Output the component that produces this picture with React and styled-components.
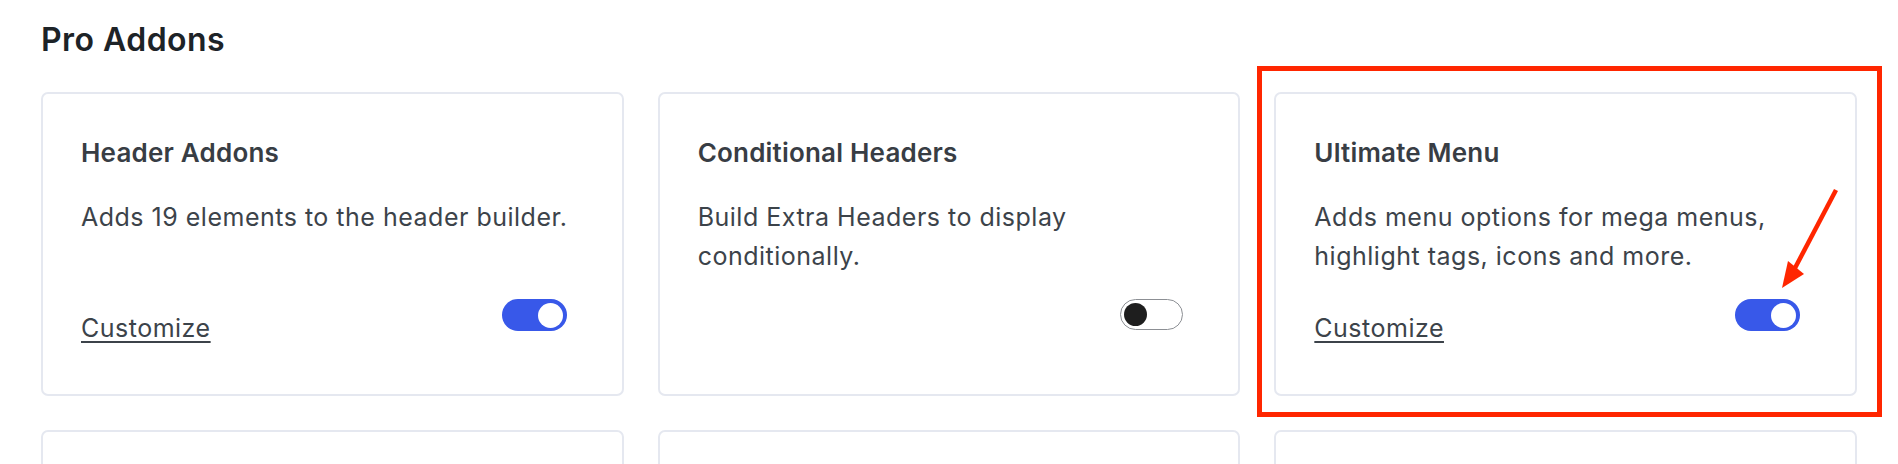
import React from 'react';
import styled, { createGlobalStyle } from 'styled-components';

const GlobalStyle = createGlobalStyle`
  html, body {
    margin: 0;
    padding: 0;
    background: #fff;
    overflow: hidden;
  }
  body {
    font-family: Inter, "Noto Sans", "Liberation Sans", sans-serif;
    color: #3c434a;
  }
  * {
    box-sizing: border-box;
  }
`;

const Page = styled.main`
  padding: 21px 41px 40px;
`;

const Heading = styled.h2`
  margin: 0 0 33px;
  font-size: 32px;
  line-height: 38px;
  font-weight: 600;
  letter-spacing: 0.45px;
  color: #1d2327;
`;

const AddonGrid = styled.div`
  display: grid;
  grid-template-columns: repeat(3, 1fr);
  gap: 34px;
`;

const CardSlot = styled.div`
  position: relative;
`;

const Card = styled.div`
  display: flex;
  flex-direction: column;
  height: 304px;
  padding: 41px 38px 46px;
  background: #fff;
  border: 2px solid #e5e8f0;
  border-radius: 7px;
`;

const CardTitle = styled.h3`
  margin: 0;
  font-size: 26px;
  line-height: 35px;
  font-weight: 600;
  letter-spacing: 0.2px;
  color: #383d44;
`;

const CardText = styled.p`
  margin: 28px 0 0;
  font-size: 25px;
  line-height: 39px;
  letter-spacing: 0.5px;
  color: #3c434a;
`;

const CardFooter = styled.div`
  margin-top: auto;
  min-height: 49px;
  display: flex;
  align-items: flex-start;
  justify-content: space-between;
  padding-right: 17px;
`;

const CustomizeLink = styled.a`
  margin-top: 10px;
  font-size: 25px;
  line-height: 39px;
  letter-spacing: 0.5px;
  color: #3c434a;
  text-decoration: underline;
  text-decoration-thickness: 2px;
  text-underline-offset: 4px;
`;

const Toggle = styled.span`
  margin-left: auto;
  width: ${(p) => (p.$on ? 65 : 63)}px;
  height: ${(p) => (p.$on ? 32 : 31)}px;
  border-radius: 999px;
  background: ${(p) => (p.$on ? '#3858e9' : '#fff')};
  border: ${(p) => (p.$on ? 'none' : '1.5px solid #8c8f94')};
  display: flex;
  align-items: center;
  justify-content: ${(p) => (p.$on ? 'flex-end' : 'flex-start')};
  padding: 0 ${(p) => (p.$on ? 4 : 2.5)}px;
`;

const Knob = styled.span`
  width: ${(p) => (p.$on ? 25 : 23)}px;
  height: ${(p) => (p.$on ? 25 : 23)}px;
  border-radius: 50%;
  background: ${(p) => (p.$on ? '#fff' : '#1e1e1e')};
`;

// annotation drawn over the highlighted card
const Highlight = styled.div`
  position: absolute;
  left: -17px;
  top: -26px;
  right: -25px;
  bottom: -21px;
  border: 5px solid #ff2600;
  pointer-events: none;
`;

const Arrow = styled.svg`
  position: absolute;
  left: 500px;
  top: 90px;
  width: 70px;
  height: 115px;
  pointer-events: none;
`;

const addons = [
  { id: 'header', title: 'Header Addons', text: 'Adds 19 elements to the header builder.', on: true, link: true },
  { id: 'conditional', title: 'Conditional Headers', text: 'Build Extra Headers to display conditionally.', on: false },
  { id: 'menu', title: 'Ultimate Menu', text: 'Adds menu options for mega menus, highlight tags, icons and more.', on: true, link: true, marked: true },
  // second row is only peeking in at the bottom edge
  { id: 'row2-a' },
  { id: 'row2-b' },
  { id: 'row2-c' },
];

const AddonCard = ({ title, text, on, link, marked }) => (
  <CardSlot>
    <Card>
      {title && (
        <>
          <CardTitle>{title}</CardTitle>
          <CardText>{text}</CardText>
          <CardFooter>
            {link && <CustomizeLink href="#">Customize</CustomizeLink>}
            <Toggle $on={on}>
              <Knob $on={on} />
            </Toggle>
          </CardFooter>
        </>
      )}
    </Card>
    {marked && (
      <>
        <Highlight />
        <Arrow viewBox="0 0 70 115">
          <line x1="62" y1="8" x2="21" y2="86" stroke="#ff2600" strokeWidth="4.5" />
          <polygon points="8,106 30,92 14,79" fill="#ff2600" />
        </Arrow>
      </>
    )}
  </CardSlot>
);

export default function App() {
  return (
    <>
      <GlobalStyle />
      <Page>
        <Heading>Pro Addons</Heading>
        <AddonGrid>
          {addons.map((a) => (
            <AddonCard key={a.id} {...a} />
          ))}
        </AddonGrid>
      </Page>
    </>
  );
}
